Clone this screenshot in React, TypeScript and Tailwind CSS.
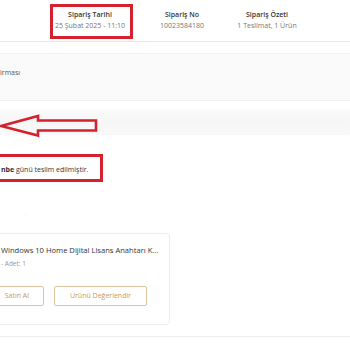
import React from "react";

export default function App() {
  const font = { fontFamily: '"Open Sans", "Liberation Sans", sans-serif' };
  return (
    <div className="relative w-[350px] h-[350px] overflow-hidden bg-white text-[#333]" style={font}>
      {/* header */}
      <div className="h-[42px] border-b border-[#e6e6e6] flex items-start pt-[9px]">
        <div className="ml-[48px] w-[84px] flex flex-col items-center">
          <div className="text-[7px] font-semibold leading-[11px] text-[#333]">Sipariş Tarihi</div>
          <div className="text-[7px] leading-[11px] text-[#777]">25 Şubat 2025 - 11:10</div>
        </div>
        <div className="ml-[8px] w-[84px] flex flex-col items-center">
          <div className="text-[7px] font-semibold leading-[11px] text-[#333]">Sipariş No</div>
          <div className="text-[7px] leading-[11px] text-[#777]">10023584180</div>
        </div>
        <div className="ml-[1px] w-[84px] flex flex-col items-center">
          <div className="text-[7px] font-semibold leading-[11px] text-[#333]">Sipariş Özeti</div>
          <div className="text-[7px] leading-[11px] text-[#777]">1 Teslimat, 1 Ürün</div>
        </div>
      </div>

      {/* band 1 */}
      <div className="mt-[11px] h-[48px] bg-[#fafafa] border-t border-[#f0f0f0] border-b border-[#e8e8e8] flex items-start pt-[14px]">
        <span className="text-[7px] text-[#555] leading-[10px]">irması</span>
      </div>

      {/* band 2 */}
      <div className="mt-[8px] h-[26px] bg-gradient-to-b from-[#fbfbfb] via-[#f6f6f6] to-[#f9f9f9]" />

      {/* delivery text */}
      <div className="mt-[28px] h-[14px] flex items-center">
        <span className="text-[7px] text-[#333] leading-[10px] pl-[1px]">
          <b>nbe</b> günü teslim edilmiştir.
        </span>
      </div>

      {/* faint */}
      <div className="mt-[33px] h-[10px] pl-[22px] text-[6px] text-[#f2f2f2]">
        —
      </div>

      {/* card */}
      <div className="mt-[13px] ml-[-10px] w-[180px] h-[92px] border border-[#ececec] rounded-[4px] bg-white flex flex-col pl-[10px]">
        <div className="mt-[11px] text-[7.6px] leading-[11px] text-[#333] whitespace-nowrap">
          Windows 10 Home Dijital Lisans Anahtarı K...
        </div>
        <div className="mt-[3px] text-[6.5px] leading-[9px] text-[#999] whitespace-nowrap">- Adet: 1</div>
        <div className="mt-[18px] flex gap-[10px] ml-[-20px]">
          <div className="w-[63px] h-[20px] border border-[#dcc39e] rounded-[2px] flex items-center justify-end pr-[14px] text-[7px] text-[#c79a5e]">
            Satın Al
          </div>
          <div className="w-[93px] h-[20px] border border-[#dcc39e] rounded-[2px] flex items-center justify-center text-[7px] text-[#c79a5e]">
            Ürünü Değerlendir
          </div>
        </div>
      </div>

      <div className="mt-[11px] border-t border-[#eeeeee]" />

      {/* annotations */}
      <div className="absolute left-[50px] top-[4px] w-[83px] h-[35px] border-[3px] border-[#d3222d]" />
      <div className="absolute left-[-4px] top-[154px] w-[107px] h-[28px] border-[3px] border-[#d3222d]" />
      <svg className="absolute left-0 top-[110px]" width="100" height="30" viewBox="0 0 100 30">
        <path
          d="M1 16 L38 6 L38 10.5 L96 10.5 L96 20.5 L38 20.5 L38 25.5 Z"
          fill="none"
          stroke="#d3222d"
          strokeWidth="2.6"
          strokeLinejoin="miter"
        />
      </svg>
    </div>
  );
}
